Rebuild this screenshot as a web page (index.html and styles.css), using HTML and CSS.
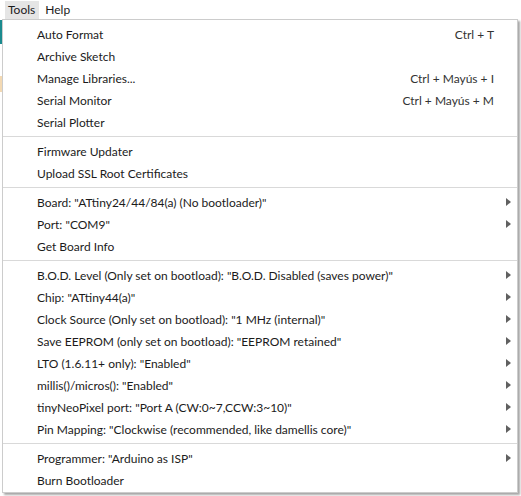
FILE: index.html
```html
<!DOCTYPE html>
<html>
<head>
<meta charset="utf-8">
<link rel="stylesheet" href="styles.css">
</head>
<body>
<div class="app">
  <div class="menubar">
    <span class="mb-item active">Tools</span>
    <span class="mb-item">Help</span>
  </div>
  <div class="stage">
    <div class="edge"><div class="teal"></div><div class="orange"></div></div>
    <div class="menu">
      <div class="item"><span class="label">Auto Format</span><span class="key">Ctrl + T</span><span class="sub"></span></div>
      <div class="item"><span class="label">Archive Sketch</span><span class="sub"></span></div>
      <div class="item"><span class="label">Manage Libraries...</span><span class="key">Ctrl + Mayús + I</span><span class="sub"></span></div>
      <div class="item"><span class="label">Serial Monitor</span><span class="key">Ctrl + Mayús + M</span><span class="sub"></span></div>
      <div class="item"><span class="label">Serial Plotter</span><span class="sub"></span></div>
      <div class="sep"></div>
      <div class="item"><span class="label">Firmware Updater</span><span class="sub"></span></div>
      <div class="item"><span class="label">Upload SSL Root Certificates</span><span class="sub"></span></div>
      <div class="sep"></div>
      <div class="item"><span class="label">Board: "ATtiny24/44/84(a) (No bootloader)"</span><span class="sub"><span class="arrow"></span></span></div>
      <div class="item"><span class="label">Port: "COM9"</span><span class="sub"><span class="arrow"></span></span></div>
      <div class="item"><span class="label">Get Board Info</span><span class="sub"></span></div>
      <div class="sep"></div>
      <div class="item"><span class="label">B.O.D. Level (Only set on bootload): "B.O.D. Disabled (saves power)"</span><span class="sub"><span class="arrow"></span></span></div>
      <div class="item"><span class="label">Chip: "ATtiny44(a)"</span><span class="sub"><span class="arrow"></span></span></div>
      <div class="item"><span class="label">Clock Source (Only set on bootload): "1 MHz (internal)"</span><span class="sub"><span class="arrow"></span></span></div>
      <div class="item"><span class="label">Save EEPROM (only set on bootload): "EEPROM retained"</span><span class="sub"><span class="arrow"></span></span></div>
      <div class="item"><span class="label">LTO (1.6.11+ only): "Enabled"</span><span class="sub"><span class="arrow"></span></span></div>
      <div class="item"><span class="label">millis()/micros(): "Enabled"</span><span class="sub"><span class="arrow"></span></span></div>
      <div class="item"><span class="label">tinyNeoPixel port: "Port A (CW:0~7,CCW:3~10)"</span><span class="sub"><span class="arrow"></span></span></div>
      <div class="item"><span class="label">Pin Mapping: "Clockwise (recommended, like damellis core)"</span><span class="sub"><span class="arrow"></span></span></div>
      <div class="sep"></div>
      <div class="item"><span class="label">Programmer: "Arduino as ISP"</span><span class="sub"><span class="arrow"></span></span></div>
      <div class="item"><span class="label">Burn Bootloader</span><span class="sub"></span></div>
    </div>
  </div>
</div>
</body>
</html>
```
FILE: styles.css
```css
html, body {
  margin: 0;
  padding: 0;
  background: #ffffff;
}
body {
  font-family: "Lato", "Open Sans", sans-serif;
  font-size: 12px;
  color: #1b1b1b;
}
.app {
  width: 521px;
  height: 496px;
  overflow: hidden;
  background: #ffffff;
}
.menubar {
  display: flex;
  align-items: stretch;
  height: 18px;
  padding: 1px 0 0 5px;
  gap: 3px;
}
.mb-item {
  display: flex;
  align-items: center;
  padding: 0 4px 0 3px;
  line-height: 18px;
}
.mb-item.active {
  background: #e5e5e5;
}
.stage {
  display: flex;
  align-items: flex-start;
}
.edge {
  width: 2px;
  display: flex;
  flex-direction: column;
}
.teal {
  height: 24px;
  margin-top: 1px;
  background: #1a8a8e;
}
.orange {
  height: 16px;
  margin-top: 32px;
  background: #f3d9b3;
}
.menu {
  width: 514px;
  border: 1px solid #cccccc;
  background: #ffffff;
  padding: 3px 0 1px;
  box-shadow: 2px 2px 2px rgba(0, 0, 0, 0.35);
}
.item {
  display: flex;
  align-items: center;
  height: 22px;
  padding: 0 6px 0 34px;
  white-space: nowrap;
}
.label {
  flex: 1;
}
.key {
  color: #333333;
}
.sub {
  width: 17px;
  display: flex;
  justify-content: flex-end;
  align-items: center;
}
.arrow {
  width: 0;
  height: 0;
  border-top: 4px solid transparent;
  border-bottom: 4px solid transparent;
  border-left: 5px solid #606060;
}
.sep {
  height: 1px;
  background: #d9d9d9;
  margin: 3px 0 3px;
}
```
